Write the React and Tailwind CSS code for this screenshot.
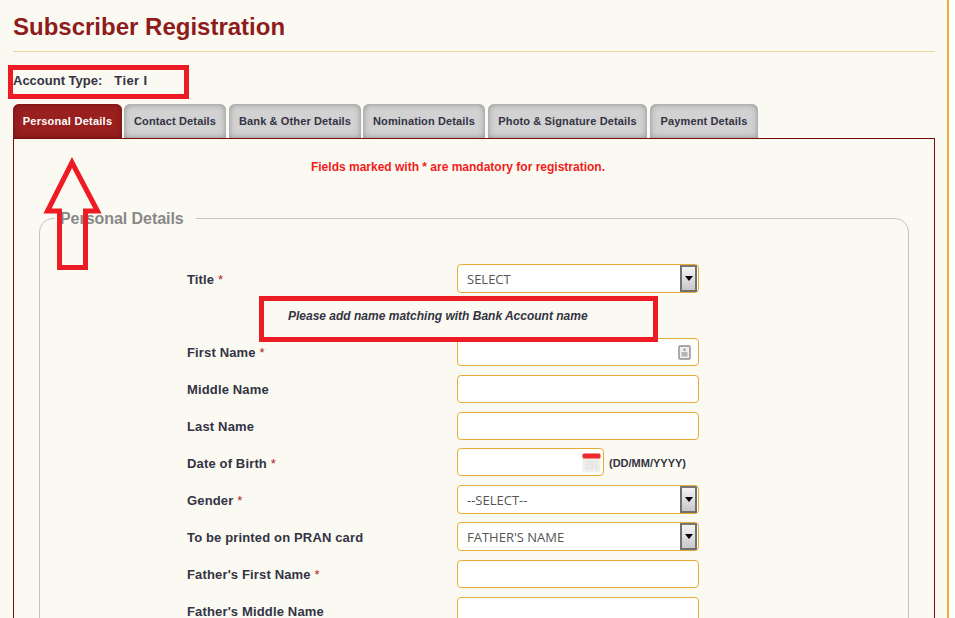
const font = { fontFamily: '"Liberation Sans", Arial, sans-serif' };

function Chevron() {
  return (
    <span className="w-[17px] h-[27px] mr-[1px] border-2 border-[#6f6f6f] border-t-[#777] bg-gradient-to-b from-[#f4f4f4] to-[#c8c8c8] flex items-center justify-center shrink-0">
      <svg width="8" height="5" viewBox="0 0 8 5"><path d="M0 0h8L4 5z" fill="#000" /></svg>
    </span>
  );
}

function SelectBox({ value }) {
  return (
    <div className="w-[242px] h-[29px] mb-[2px] bg-white border border-[#e8ab33] rounded-[4px] flex items-center justify-between overflow-hidden">
      <span className="pl-[9px] pt-[2px] text-[13px] leading-none text-[#555]" style={{ fontFamily: '"Open Sans", sans-serif' }}>{value}</span>
      <Chevron />
    </div>
  );
}

function TextBox({ children, className = "w-[242px] mb-[1px]" }) {
  return (
    <div className={`${className} h-[28px] bg-white border border-[#e8ab33] rounded-[4px] flex items-center justify-end`}>{children}</div>
  );
}

function Row({ label, req, children, className = "h-[37px]" }) {
  return (
    <div className={`flex items-center ${className}`}>
      <div className="w-[270px] text-[13px] font-bold tracking-[0.15px] text-[#333344] shrink-0">
        {label}
        {req && <span className="text-[#b02222] font-normal"> *</span>}
      </div>
      {children}
    </div>
  );
}

const tabs = [
  { t: "Contact Details", c: "w-[102px] ml-[2px]" },
  { t: "Bank & Other Details", c: "w-[132px] ml-[3px]" },
  { t: "Nomination Details", c: "w-[122px] ml-[2px]" },
  { t: "Photo & Signature Details", c: "w-[159px] ml-[3px]" },
  { t: "Payment Details", c: "w-[108px] ml-[3px]" },
];

export default function App() {
  return (
    <div className="relative w-[955px] h-[618px] overflow-hidden bg-white" style={font}>
      <div className="-mt-[6px] -ml-[6px] w-[955px] h-[640px] bg-[#fbfaf2] border-2 border-[#efad34] rounded-[8px] pl-[17px] pr-[12px]">
        <div className="h-[52px] pt-[14px] border-b border-[#e8d69c] mt-[4px] text-[24px] leading-[28px] font-bold text-[#8e1c1c]">
          <div className="-mt-[1px]">Subscriber Registration</div>
        </div>
        <div className="h-[52px] pt-[20px] text-[13px] leading-[17px] font-bold text-[#333344]">
          Account Type:<span className="ml-[12px] tracking-[0.4px]">Tier I</span>
        </div>
        <div className="flex h-[34px] text-[11px] font-bold tracking-[0.13px]">
          <div className="w-[109px] rounded-t-[6px] bg-[#9a1f1f] shadow-[inset_0_0_6px_#6e1010] text-white tracking-[0.25px] flex items-center justify-center">Personal Details</div>
          {tabs.map((x) => (
            <div key={x.t} className={`${x.c} rounded-t-[6px] bg-[#d2d2d2] shadow-[inset_0_0_6px_#8a8a8a] text-[#333344] flex items-center justify-center whitespace-nowrap`}>{x.t}</div>
          ))}
        </div>
        <div className="border border-[#7a0c0c] h-[500px] px-[25px]">
          <div className="pt-[20px] pr-[32px] text-center text-[12px] leading-[16px] font-bold text-[#f01c1c]">Fields marked with * are mandatory for registration.</div>
          <div className="relative mt-[43px] w-[870px] h-[460px] border border-[#c6c6c0] rounded-[14px] pl-[147px] pt-[42px]">
            <div className="absolute -top-[9px] left-[15px] bg-[#fbfaf2] pl-[5px] pr-[12px] text-[16px] leading-[18px] font-bold tracking-[-0.05px] text-[#888888]">Personal Details</div>
            <Row label="Title" req className="h-[37px]"><SelectBox value="SELECT" /></Row>
            <div className="h-[36px]" />
            <Row label="First Name" req>
              <TextBox>
                <svg width="13" height="15" viewBox="0 0 13 15" className="mr-[7px]">
                  <rect x="1" y="1" width="11" height="13" rx="1" fill="#eeeeea" stroke="#8d8d8d" strokeWidth="1.4" />
                  <path d="M5.5 3.5h2v2.5h-2z" fill="#9a9a9a" />
                  <rect x="3.5" y="7" width="6" height="4.5" fill="#b3b3b3" />
                </svg>
              </TextBox>
            </Row>
            <Row label="Middle Name"><TextBox /></Row>
            <Row label="Last Name"><TextBox /></Row>
            <Row label="Date of Birth" req>
              <TextBox className="w-[147px] mb-[3px]">
                <svg width="19" height="20" viewBox="0 0 19 20" className="mr-[2px] mt-[2px]">
                  <rect x="0.5" y="0.5" width="18" height="19" rx="2" fill="#efefec" />
                  <rect x="0.5" y="0.5" width="18" height="5" rx="1.5" fill="#ee2a2a" />
                  <path d="M3 9h13M3 12h13M3 15h13M6 7v10M10 7v10M14 7v10" stroke="#e2e2e2" strokeWidth="1" />
                </svg>
              </TextBox>
              <span className="ml-[5px] text-[11px] font-bold text-[#333344]">(DD/MM/YYYY)</span>
            </Row>
            <Row label="Gender" req><SelectBox value="--SELECT--" /></Row>
            <Row label="To be printed on PRAN card"><SelectBox value="FATHER'S NAME" /></Row>
            <Row label="Father's First Name" req><TextBox /></Row>
            <Row label="Father's Middle Name"><TextBox /></Row>
          </div>
        </div>
      </div>

      {/* Red annotations drawn over the page */}
      <div className="absolute left-[8px] top-[65px] w-[181px] h-[34px] border-[5px] border-[#ed1c24]" />
      <div className="absolute left-[259px] top-[296px] w-[399px] h-[46px] border-[5px] border-[#ed1c24] flex items-center">
        <span className="ml-[24px] -mt-[6px] text-[12px] font-bold italic text-[#333344]">Please add name matching with Bank Account name</span>
      </div>
      <svg className="absolute left-[40px] top-[150px]" width="70" height="125" viewBox="40 150 70 125">
        <path d="M72 162.5 L47.5 211 L59.5 211 L59.5 267.5 L85.5 267.5 L85.5 211 L97.5 211 Z" fill="none" stroke="#ed1c24" strokeWidth="5" strokeLinejoin="miter" />
      </svg>
    </div>
  );
}
